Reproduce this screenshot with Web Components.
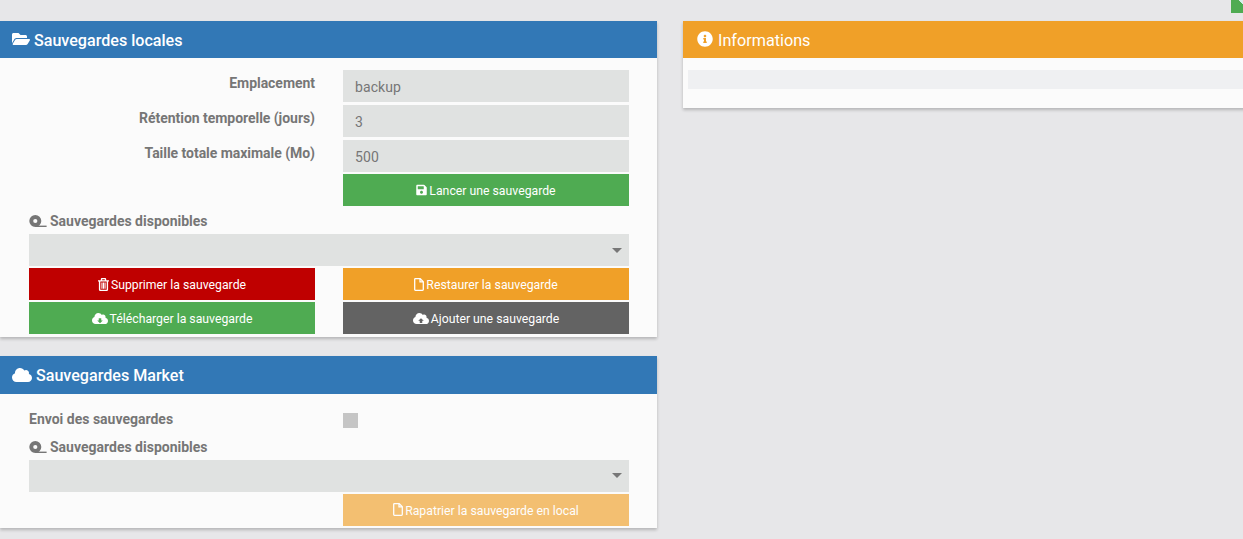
<!DOCTYPE html>
<html lang="fr">
<head>
<meta charset="utf-8">
<title>Sauvegardes</title>
<style>
  html, body { margin: 0; height: 539px; overflow: hidden; background: #e7e7e9; }
  body { font-family: Roboto, "Liberation Sans", sans-serif; }
</style>
</head>
<body>

<backup-page>
  <sb-panel slot="left" icon="folder" heading="Sauvegardes locales">
    <sb-row label="Emplacement"><sb-input value="backup"></sb-input></sb-row>
    <sb-row label="Rétention temporelle (jours)"><sb-input value="3"></sb-input></sb-row>
    <sb-row label="Taille totale maximale (Mo)"><sb-input value="500"></sb-input></sb-row>
    <sb-row><sb-button color="green" icon="save">Lancer une sauvegarde</sb-button></sb-row>
    <sb-list-title>Sauvegardes disponibles</sb-list-title>
    <sb-select></sb-select>
    <sb-pair>
      <sb-button color="red" icon="trash">Supprimer la sauvegarde</sb-button>
      <sb-button color="orange" icon="file">Restaurer la sauvegarde</sb-button>
    </sb-pair>
    <sb-pair>
      <sb-button color="green" icon="down">Télécharger la sauvegarde</sb-button>
      <sb-button color="grey" icon="up">Ajouter une sauvegarde</sb-button>
    </sb-pair>
  </sb-panel>

  <sb-panel slot="left" icon="cloud" heading="Sauvegardes Market" class="market">
    <sb-check-row label="Envoi des sauvegardes"></sb-check-row>
    <sb-list-title>Sauvegardes disponibles</sb-list-title>
    <sb-select></sb-select>
    <sb-pair>
      <span></span>
      <sb-button color="orange" icon="file" disabled>Rapatrier la sauvegarde en local</sb-button>
    </sb-pair>
  </sb-panel>

  <sb-panel slot="right" icon="info" heading="Informations" tone="orange">
    <sb-log></sb-log>
  </sb-panel>
</backup-page>

<script>
(() => {
  // icones dessinees a la main, cloud down/up = nuage + fleche
  const CLOUD = 'M537.6 226.6c4.1-10.7 6.4-22.4 6.4-34.6 0-53-43-96-96-96-19.7 0-38.1 6-53.3 16.2C367 64.2 315.3 32 256 32c-88.4 0-160 71.6-160 160 0 2.7.1 5.4.2 8.1C40.2 219.8 0 273.2 0 336c0 79.5 64.5 144 144 144h368c70.7 0 128-57.3 128-128 0-61.9-44-113.6-102.4-125.4z';
  const ICONS = {
    folder: { vb: '0 0 576 512', w: 18, h: 16, svg: '<path fill="currentColor" d="M572.694 292.093L500.27 416.248A63.997 63.997 0 0 1 444.989 448H45.025c-18.523 0-30.064-20.093-20.731-36.093l72.424-124.155A64 64 0 0 1 152 256h399.964c18.523 0 30.064 20.093 20.73 36.093zM152 224h328v-48c0-26.51-21.49-48-48-48H272l-64-64H48C21.49 64 0 85.49 0 112v278.046l69.077-118.418C86.214 242.25 117.989 224 152 224z"/>' },
    cloud: { vb: '0 0 640 512', w: 20, h: 16, svg: `<path fill="currentColor" d="${CLOUD}"/>` },
    info: { vb: '0 0 512 512', w: 16, h: 16, svg: '<path fill="currentColor" d="M256 8C119.043 8 8 119.083 8 256c0 136.997 111.043 248 248 248s248-111.003 248-248C504 119.083 392.957 8 256 8zm0 110c23.196 0 42 18.804 42 42s-18.804 42-42 42-42-18.804-42-42 18.804-42 42-42zm56 254c0 6.627-5.373 12-12 12h-88c-6.627 0-12-5.373-12-12v-24c0-6.627 5.373-12 12-12h12v-64h-12c-6.627 0-12-5.373-12-12v-24c0-6.627 5.373-12 12-12h64c6.627 0 12 5.373 12 12v100h12c6.627 0 12 5.373 12 12v24z"/>' },
    save: { vb: '0 0 448 512', w: 11, h: 12, svg: '<path fill="currentColor" d="M433.941 129.941l-83.882-83.882A48 48 0 0 0 316.118 32H48C21.49 32 0 53.49 0 80v352c0 26.51 21.49 48 48 48h352c26.51 0 48-21.49 48-48V163.882a48 48 0 0 0-14.059-33.941zM224 416c-35.346 0-64-28.654-64-64 0-35.346 28.654-64 64-64s64 28.654 64 64c0 35.346-28.654 64-64 64zm96-304.52V212c0 6.627-5.373 12-12 12H76c-6.627 0-12-5.373-12-12V108c0-6.627 5.373-12 12-12h228.52c3.183 0 6.235 1.264 8.485 3.515l3.48 3.48A11.996 11.996 0 0 1 320 111.48z"/>' },
    trash: { vb: '0 0 11 13', w: 11, h: 13, svg: '<path fill="none" stroke="currentColor" stroke-width="1.4" d="M1.6 3.2v8.2q0 1 1 1h5.8q1 0 1-1V3.2M0 2.9h11M3.5 2.7V1.3q0-.7.7-.7h2.6q.7 0 .7.7v1.4"/><path fill="currentColor" d="M3.4 4.6h1.1v6.2H3.4zM4.95 4.6h1.1v6.2H4.95zM6.5 4.6h1.1v6.2H6.5z"/>' },
    file: { vb: '0 0 10 13', w: 10, h: 13, svg: '<path fill="none" stroke="currentColor" stroke-width="1.3" d="M.7 1.4q0-.8.8-.8h4.7l3.1 3.1v7.8q0 .8-.8.8h-7q-.8 0-.8-.8zM6 .8v3.1h3.2"/>' },
    down: { vb: '0 0 640 512', w: 16, h: 13, svg: `<path fill="currentColor" d="${CLOUD}"/><path fill="var(--knock)" d="M270 250h100v90h62L320 446 208 340h62z"/>` },
    up: { vb: '0 0 640 512', w: 16, h: 13, svg: `<path fill="currentColor" d="${CLOUD}"/><path fill="var(--knock)" d="M270 440h100v-90h62L320 244 208 350h62z"/>` },
    tape: { vb: '0 0 18 12', w: 18, h: 12, svg: '<path fill="currentColor" fill-rule="evenodd" d="M6.3 0a6 6 0 1 0 0 12a6 6 0 0 0 0-12zM6.3 3.9a2.1 2.1 0 1 1 0 4.2a2.1 2.1 0 0 1 0-4.2z"/><path fill="currentColor" d="M6.3 10.6H17.6V12H6.3z"/>' }
  };
  const iconHtml = name => {
    const i = ICONS[name];
    return `<svg xmlns="http://www.w3.org/2000/svg" viewBox="${i.vb}" width="${i.w}" height="${i.h}" aria-hidden="true">${i.svg}</svg>`;
  };

  class BaseEl extends HTMLElement {
    constructor(html) {
      super();
      this.attachShadow({ mode: 'open' }).innerHTML = html;
    }
  }

  class BackupPage extends BaseEl {
    constructor() {
      super(`<style>
        :host { display: block; }
        .top { display: flex; justify-content: flex-end; height: 12.67px; margin-bottom: 8px; }
        .top i { display: block; width: 12px; height: 13px; background: linear-gradient(225deg, #d8efe9 0 3px, #4fab52 3px); }
        .cols { display: flex; gap: 26px; align-items: flex-start; }
        .left { flex: 0 0 657px; display: flex; flex-direction: column; gap: 19px; }
        .right { flex: 0 0 620px; }
      </style>
      <div class="top"><i></i></div>
      <div class="cols">
        <div class="left"><slot name="left"></slot></div>
        <div class="right"><slot name="right"></slot></div>
      </div>`);
    }
  }

  class SbPanel extends BaseEl {
    constructor() {
      super(`<style>
        :host { display: block; background: #fbfbfb; box-shadow: 0 2px 3px rgba(0,0,0,.22); }
        header { height: 37.5px; background: #3278b6; color: #fff; display: flex; align-items: center;
          padding-left: 12px; font-size: 16.1px; font-weight: 500; gap: 4px; }
        header #t { position: relative; top: 1px; }
        :host([tone="orange"]) header { background: #f0a028; padding-left: 14px; gap: 5px; font-size: 16.2px; font-weight: 400; }
        svg { display: block; }
        main { display: block; padding: 12px 28px 1px 29px; }
        :host([tone="orange"]) main { padding: 12px 0 19px 5px; }
        :host(.market) main { padding-top: 19px; padding-bottom: 0; }
      </style>
      <header><span id="ic"></span><span id="t"></span></header>
      <main><slot></slot></main>`);
    }
    connectedCallback() {
      this.shadowRoot.getElementById('t').textContent = this.getAttribute('heading') || '';
      this.shadowRoot.getElementById('ic').innerHTML = iconHtml(this.getAttribute('icon'));
    }
  }

  // ligne formulaire : label a droite dans la colonne gauche, champ dans la colonne droite
  class SbRow extends BaseEl {
    constructor() {
      super(`<style>
        :host { display: grid; grid-template-columns: 286px 286px; column-gap: 28px; margin-bottom: 2.7px; }
        label { text-align: right; font-size: 14px; font-weight: 700; color: #767676; line-height: 20px; padding-top: 3px; letter-spacing: -.04px; }
      </style>
      <label></label><div><slot></slot></div>`);
    }
    connectedCallback() {
      this.shadowRoot.querySelector('label').textContent = this.getAttribute('label') || '';
    }
  }

  class SbCheckRow extends BaseEl {
    constructor() {
      super(`<style>
        :host { display: grid; grid-template-columns: 286px 286px; column-gap: 28px; height: 15px; margin-bottom: 9px; }
        label { font-size: 14px; font-weight: 700; color: #767676; line-height: 13px; }
        i { display: block; width: 15px; height: 15px; background: #c5c5c5; }
      </style>
      <label></label><i></i>`);
    }
    connectedCallback() {
      this.shadowRoot.querySelector('label').textContent = this.getAttribute('label') || '';
    }
  }

  class SbInput extends BaseEl {
    constructor() {
      super(`<style>
        :host { display: block; height: 32px; background: #e0e2e1; color: #767676; font-size: 14px;
          line-height: 34px; padding-left: 12px; letter-spacing: .1px; }
      </style><span></span>`);
    }
    connectedCallback() {
      this.shadowRoot.querySelector('span').textContent = this.getAttribute('value') || '';
    }
  }

  class SbButton extends BaseEl {
    constructor() {
      super(`<style>
        :host { display: flex; box-sizing: border-box; height: 32px; padding-top: 2px; align-items: center; justify-content: center; gap: 2px;
          font-size: 12.25px; color: #fff; --knock: #4fab52; background: #4fab52; }
        :host([color="red"]) { background: #bf0000; }
        :host([color="orange"]) { background: #f0a028; }
        :host([color="grey"]) { background: #636363; --knock: #636363; }
        :host([disabled]) { opacity: .65; }
        span { display: block; margin-top: -2px; }
        svg { display: block; }
      </style><span id="ic"></span><slot></slot>`);
    }
    connectedCallback() {
      this.shadowRoot.getElementById('ic').innerHTML = iconHtml(this.getAttribute('icon'));
    }
  }

  class SbListTitle extends BaseEl {
    constructor() {
      super(`<style>
        :host { display: flex; align-items: center; gap: 3px; font-size: 14px; font-weight: 700; color: #767676;
          height: 20px; margin-top: 5px; margin-bottom: 3px; }
        span { display: block; }
        svg { display: block; }
      </style><span>${iconHtml('tape')}</span><slot></slot>`);
    }
  }

  class SbSelect extends BaseEl {
    constructor() {
      super(`<style>
        :host { display: flex; height: 32px; background: #e0e2e1; justify-content: flex-end; align-items: center;
          padding-right: 7px; margin-bottom: 2px; }
        i { display: block; width: 0; height: 0; border-left: 5px solid transparent; border-right: 5px solid transparent;
          border-top: 5px solid #777; }
      </style><i></i>`);
    }
  }

  class SbPair extends BaseEl {
    constructor() {
      super(`<style>
        :host { display: grid; grid-template-columns: 286px 286px; column-gap: 28px; margin-bottom: 2px; }
      </style><slot></slot>`);
    }
  }

  class SbLog extends BaseEl {
    constructor() {
      super(`<style>:host { display: block; height: 19px; background: #eff0f2; }</style>`);
    }
  }

  customElements.define('backup-page', BackupPage);
  customElements.define('sb-panel', SbPanel);
  customElements.define('sb-row', SbRow);
  customElements.define('sb-check-row', SbCheckRow);
  customElements.define('sb-input', SbInput);
  customElements.define('sb-button', SbButton);
  customElements.define('sb-list-title', SbListTitle);
  customElements.define('sb-select', SbSelect);
  customElements.define('sb-pair', SbPair);
  customElements.define('sb-log', SbLog);
})();
</script>
</body>
</html>
